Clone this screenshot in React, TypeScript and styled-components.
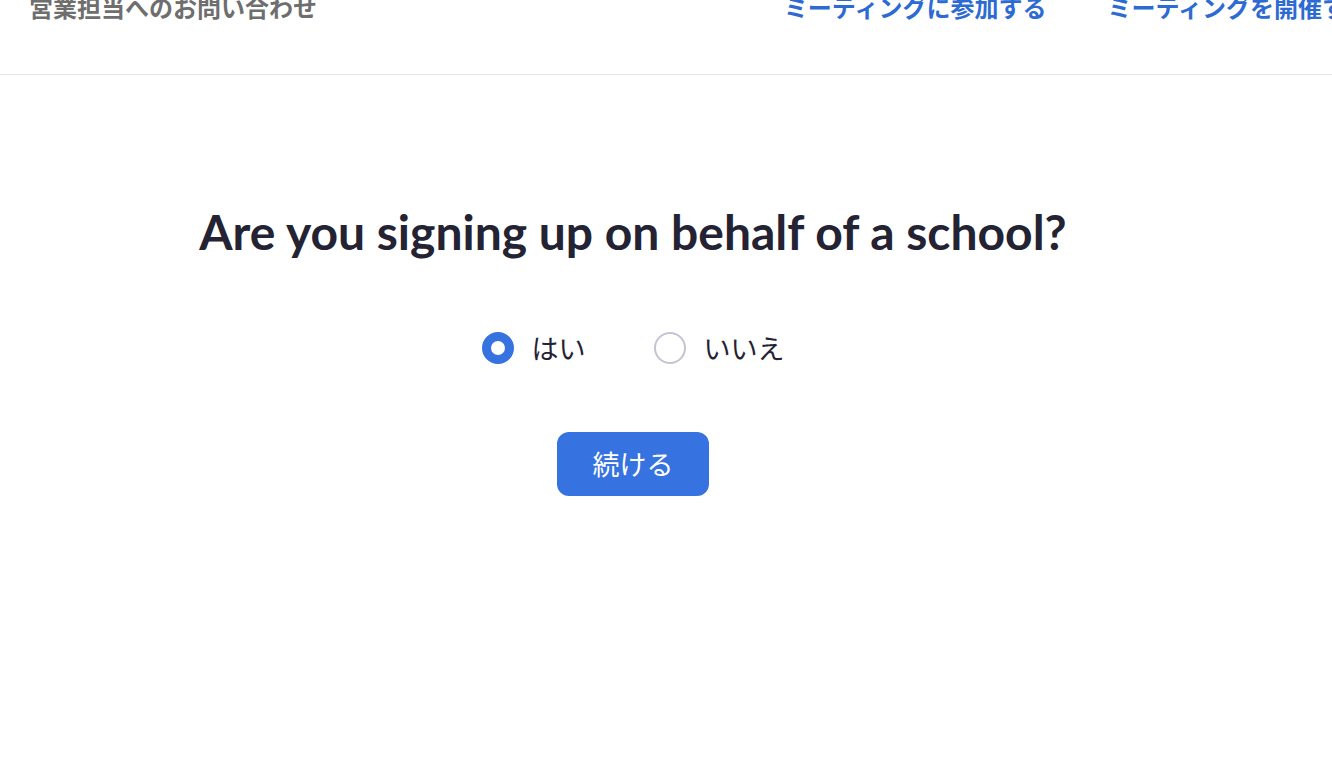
import React, { useState } from "react";
import styled, { createGlobalStyle } from "styled-components";

const GlobalStyle = createGlobalStyle`
  * { box-sizing: border-box; }
  html, body { margin: 0; padding: 0; background: #fff; }
  body {
    font-family: "Noto Sans CJK JP", "Noto Sans", sans-serif;
    overflow: hidden;
  }
`;

const Header = styled.header`
  display: flex;
  align-items: flex-start;
  justify-content: space-between;
  height: 75px;
  padding: 0 0 0 29px;
  border-bottom: 1px solid #e6e6e6;
  overflow: hidden;
`;

const HeaderText = styled.a<{ $blue?: boolean }>`
  display: block;
  margin-top: -7px;
  font-size: 24px;
  line-height: 28px;
  font-weight: 700;
  white-space: nowrap;
  text-decoration: none;
  color: ${(p) => (p.$blue ? "#2d6bd3" : "#6e6e6e")};
`;

const Nav = styled.nav`
  display: flex;
  flex-shrink: 0;
  gap: 61px;
  margin-right: -38px;
`;

const Main = styled.main`
  width: 1266px;
  display: flex;
  flex-direction: column;
  align-items: center;
  padding-top: 125px;
`;

const Title = styled.h1`
  margin: 0;
  font-family: Lato, "Noto Sans", sans-serif;
  font-weight: 700;
  font-size: 48px;
  line-height: 64px;
  color: #232333;
`;

const RadioGroup = styled.div`
  display: flex;
  align-items: center;
  gap: 68px;
  margin-top: 68px;
`;

const RadioLabel = styled.label`
  display: flex;
  align-items: center;
  gap: 18px;
  cursor: pointer;
  font-size: 27px;
  line-height: 32px;
  color: #232333;
`;

const RadioCircle = styled.span<{ $checked: boolean }>`
  display: block;
  flex-shrink: 0;
  width: 32px;
  height: 32px;
  border-radius: 50%;
  background: #fff;
  border: ${(p) => (p.$checked ? "9px solid #3673e0" : "2px solid #c4c4d2")};
`;

const Button = styled.button`
  margin-top: 68px;
  width: 152px;
  height: 64px;
  border: none;
  border-radius: 12px;
  background: #3673e0;
  color: #fff;
  font-family: "Noto Sans CJK JP", sans-serif;
  font-size: 27px;
  line-height: 32px;
  cursor: pointer;
`;

export default function App() {
  const [school, setSchool] = useState(true);
  return (
    <>
      <GlobalStyle />
      <Header>
        <HeaderText href="#">営業担当へのお問い合わせ</HeaderText>
        <Nav>
          <HeaderText $blue href="#">ミーティングに参加する</HeaderText>
          <HeaderText $blue href="#">ミーティングを開催する</HeaderText>
        </Nav>
      </Header>
      <Main>
        <Title>Are you signing up on behalf of a school?</Title>
        <RadioGroup>
          <RadioLabel onClick={() => setSchool(true)}>
            <RadioCircle $checked={school} />
            はい
          </RadioLabel>
          <RadioLabel onClick={() => setSchool(false)}>
            <RadioCircle $checked={!school} />
            いいえ
          </RadioLabel>
        </RadioGroup>
        <Button>続ける</Button>
      </Main>
    </>
  );
}
